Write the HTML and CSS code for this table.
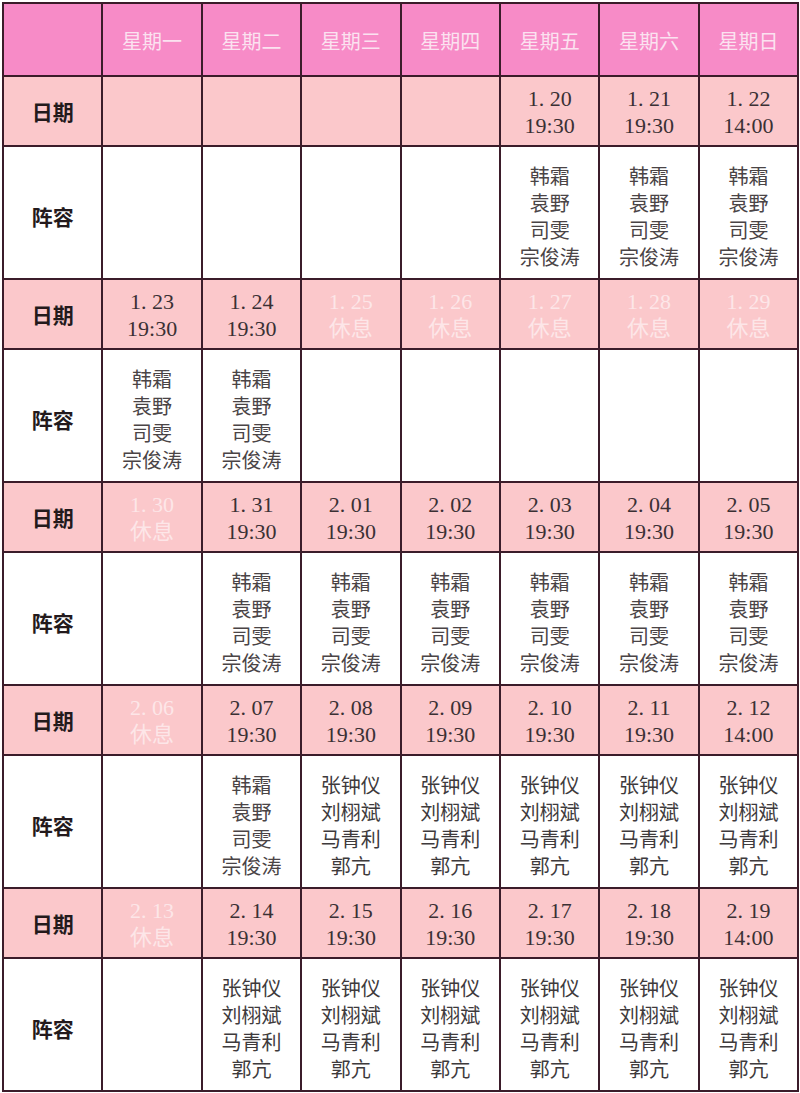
FILE: index.html
```html
<!DOCTYPE html>
<html lang="zh">
<head>
<meta charset="utf-8">
<title>排期表</title>
<link rel="stylesheet" href="styles.css">
</head>
<body>
<table class="schedule">
  <colgroup>
    <col class="c-label"><col><col><col><col><col><col><col>
  </colgroup>
  <thead>
    <tr class="head">
      <th></th><th>星期一</th><th>星期二</th><th>星期三</th><th>星期四</th><th>星期五</th><th>星期六</th><th>星期日</th>
    </tr>
  </thead>
  <tbody>
    <tr class="date">
      <th>日期</th><td></td><td></td><td></td><td></td>
      <td>1. 20<br>19:30</td><td>1. 21<br>19:30</td><td>1. 22<br>14:00</td>
    </tr>
    <tr class="cast">
      <th>阵容</th><td></td><td></td><td></td><td></td>
      <td class="song">韩霜<br>袁野<br>司雯<br>宗俊涛</td>
      <td class="song">韩霜<br>袁野<br>司雯<br>宗俊涛</td>
      <td class="song">韩霜<br>袁野<br>司雯<br>宗俊涛</td>
    </tr>
    <tr class="date">
      <th>日期</th>
      <td>1. 23<br>19:30</td><td>1. 24<br>19:30</td>
      <td class="rest">1. 25<br>休息</td><td class="rest">1. 26<br>休息</td><td class="rest">1. 27<br>休息</td><td class="rest">1. 28<br>休息</td><td class="rest">1. 29<br>休息</td>
    </tr>
    <tr class="cast">
      <th>阵容</th>
      <td class="song">韩霜<br>袁野<br>司雯<br>宗俊涛</td>
      <td class="song">韩霜<br>袁野<br>司雯<br>宗俊涛</td>
      <td></td><td></td><td></td><td></td><td></td>
    </tr>
    <tr class="date">
      <th>日期</th>
      <td class="rest">1. 30<br>休息</td>
      <td>1. 31<br>19:30</td><td>2. 01<br>19:30</td><td>2. 02<br>19:30</td><td>2. 03<br>19:30</td><td>2. 04<br>19:30</td><td>2. 05<br>19:30</td>
    </tr>
    <tr class="cast">
      <th>阵容</th>
      <td></td>
      <td class="song">韩霜<br>袁野<br>司雯<br>宗俊涛</td>
      <td class="song">韩霜<br>袁野<br>司雯<br>宗俊涛</td>
      <td class="song">韩霜<br>袁野<br>司雯<br>宗俊涛</td>
      <td class="song">韩霜<br>袁野<br>司雯<br>宗俊涛</td>
      <td class="song">韩霜<br>袁野<br>司雯<br>宗俊涛</td>
      <td class="song">韩霜<br>袁野<br>司雯<br>宗俊涛</td>
    </tr>
    <tr class="date">
      <th>日期</th>
      <td class="rest">2. 06<br>休息</td>
      <td>2. 07<br>19:30</td><td>2. 08<br>19:30</td><td>2. 09<br>19:30</td><td>2. 10<br>19:30</td><td>2. 11<br>19:30</td><td>2. 12<br>14:00</td>
    </tr>
    <tr class="cast">
      <th>阵容</th>
      <td></td>
      <td class="song">韩霜<br>袁野<br>司雯<br>宗俊涛</td>
      <td>张钟仪<br>刘栩斌<br>马青利<br>郭亢</td>
      <td>张钟仪<br>刘栩斌<br>马青利<br>郭亢</td>
      <td>张钟仪<br>刘栩斌<br>马青利<br>郭亢</td>
      <td>张钟仪<br>刘栩斌<br>马青利<br>郭亢</td>
      <td>张钟仪<br>刘栩斌<br>马青利<br>郭亢</td>
    </tr>
    <tr class="date">
      <th>日期</th>
      <td class="rest">2. 13<br>休息</td>
      <td>2. 14<br>19:30</td><td>2. 15<br>19:30</td><td>2. 16<br>19:30</td><td>2. 17<br>19:30</td><td>2. 18<br>19:30</td><td>2. 19<br>14:00</td>
    </tr>
    <tr class="cast">
      <th>阵容</th>
      <td></td>
      <td>张钟仪<br>刘栩斌<br>马青利<br>郭亢</td>
      <td>张钟仪<br>刘栩斌<br>马青利<br>郭亢</td>
      <td>张钟仪<br>刘栩斌<br>马青利<br>郭亢</td>
      <td>张钟仪<br>刘栩斌<br>马青利<br>郭亢</td>
      <td>张钟仪<br>刘栩斌<br>马青利<br>郭亢</td>
      <td>张钟仪<br>刘栩斌<br>马青利<br>郭亢</td>
    </tr>
  </tbody>
</table>
</body>
</html>
```
FILE: styles.css
```css
html, body {
  margin: 0;
  padding: 0;
  background: #ffffff;
}
body {
  padding: 2px 0 0 2px;
}
.schedule {
  border-collapse: collapse;
  table-layout: fixed;
  width: 795px;
  font-family: "Liberation Serif", "Noto Sans CJK SC", serif;
  color: #3a3436;
}
.schedule col {
  width: 99.4px;
}
.schedule th,
.schedule td {
  border: 2px solid #3b1c2a;
  text-align: center;
  vertical-align: middle;
  padding: 0;
}
.head th {
  height: 69px;
  background: #f78bc7;
  color: #fbe2f0;
  font-family: "Noto Sans CJK SC", sans-serif;
  font-weight: 400;
  font-size: 20px;
  padding-top: 2px;
}
.date th,
.date td {
  height: 66px;
  background: #fbc8cb;
}
.cast th,
.cast td {
  height: 125px;
  padding-top: 6px;
  background: #ffffff;
}
tbody th {
  font-family: "Noto Sans CJK SC", sans-serif;
  font-weight: 700;
  font-size: 21px;
  color: #231a1c;
}
.date td {
  font-size: 22px;
  line-height: 27px;
  color: #3a3034;
  padding-top: 2px;
}
.date td.rest {
  color: #fde6e8;
}
.cast td {
  font-family: "Noto Sans CJK SC", sans-serif;
  font-size: 20px;
  line-height: 27px;
  color: #3e3a3c;
}
.cast td.song {
  color: #4a4446;
}
```
